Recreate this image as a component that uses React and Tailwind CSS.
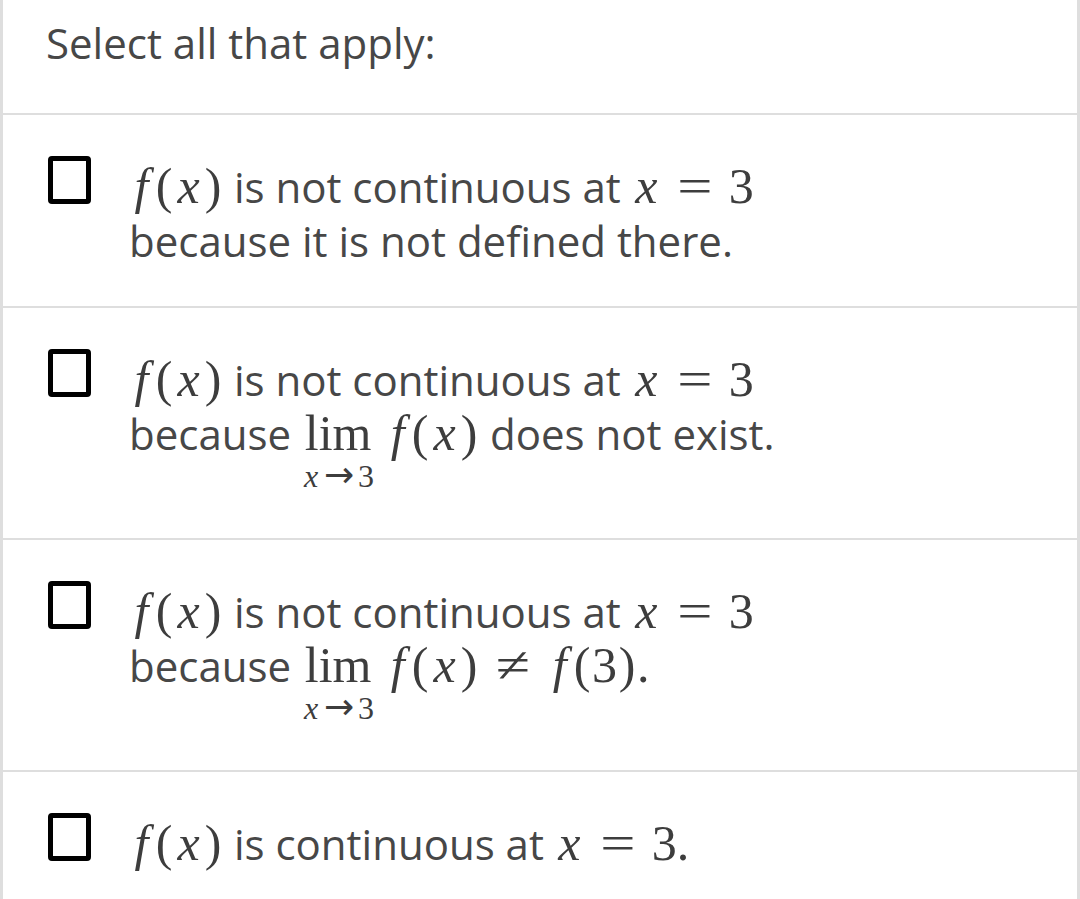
import React from "react";

const mathFont = "font-['Liberation_Serif','Times_New_Roman',serif]";
const mathCls = `${mathFont} text-[50px] leading-none text-[#3d3d3d]`;

function G({ w, italic = false, children, className = "" }) {
  return (
    <span className={`inline-block text-center ${italic ? "italic" : ""} ${w} ${className}`}>{children}</span>
  );
}

function FX({ arg = "x" }) {
  return (
    <span className={`${mathCls} whitespace-nowrap`}>
      <G w="w-[25px]" italic>f</G>
      <G w="w-[20px]">(</G>
      {arg === "x" ? (
        <G w="w-[29px]" italic>x</G>
      ) : (
        <G w="w-[25px]">{arg}</G>
      )}
      <G w="w-[20px]">)</G>
    </span>
  );
}

function XEq3({ dot = false }) {
  return (
    <span className={`${mathCls} whitespace-nowrap`}>
      <G w="w-[29px]" italic>x</G>
      <G w="w-[40px]" className="mx-[14px] scale-x-125">=</G>
      <G w="w-[25px]">3</G>
      {dot ? <span>.</span> : null}
    </span>
  );
}

function Lim() {
  return (
    <span className={`${mathFont} inline-flex flex-col items-center align-baseline text-[#3d3d3d] ml-[10px] mr-[10px]`}>
      <span className="text-[50px] leading-[44px]">lim</span>
      <span className="text-[32px] leading-[30px] mt-[2px] whitespace-nowrap flex items-baseline">
        <G w="w-[20px]" italic>x</G>
        <G w="w-[36px]" className="font-['DejaVu_Sans',sans-serif] text-[36px] leading-none">→</G>
        <G w="w-[18px]">3</G>
      </span>
    </span>
  );
}

function Checkbox() {
  return (
    <div className="w-[43px] h-[48px] shrink-0 border-[5px] border-black rounded-[4px] bg-white" />
  );
}

function Row({ children, className = "" }) {
  return (
    <div className={`flex items-start pl-[45px] pt-[41px] ${className}`}>
      <Checkbox />
      <div className="ml-[38px] mt-[4px] text-[42px] leading-[54px]">{children}</div>
    </div>
  );
}

export default function App() {
  return (
    <div className="w-[1080px] h-[899px] bg-white overflow-hidden font-['Open_Sans',sans-serif] text-[#474747]">
      <div className="h-full border-l-[3px] border-r-[3px] border-[#dedede]">
        <div className="h-[115px] border-b-[2px] border-[#dedede] pl-[43px] pt-[16px] text-[42px] leading-[54px]">
          Select all that apply:
        </div>
        <Row className="h-[193px] border-b-[2px] border-[#dedede]">
          <div>
            <FX /> is not continuous at <XEq3 />
          </div>
          <div>because it is not defined there.</div>
        </Row>
        <Row className="h-[232px] border-b-[2px] border-[#dedede]">
          <div>
            <FX /> is not continuous at <XEq3 />
          </div>
          <div>
            because
            <Lim />
            <FX /> does not exist.
          </div>
        </Row>
        <Row className="h-[232px] border-b-[2px] border-[#dedede]">
          <div>
            <FX /> is not continuous at <XEq3 />
          </div>
          <div>
            because
            <Lim />
            <FX />
            <span className={`${mathCls} inline-block w-[40px] text-center mx-[14px] scale-x-125`}>≠</span>
            <FX arg="3" />
            <span className={mathCls}>.</span>
          </div>
        </Row>
        <Row>
          <div>
            <FX /> is continuous at <XEq3 dot />
          </div>
        </Row>
      </div>
    </div>
  );
}
